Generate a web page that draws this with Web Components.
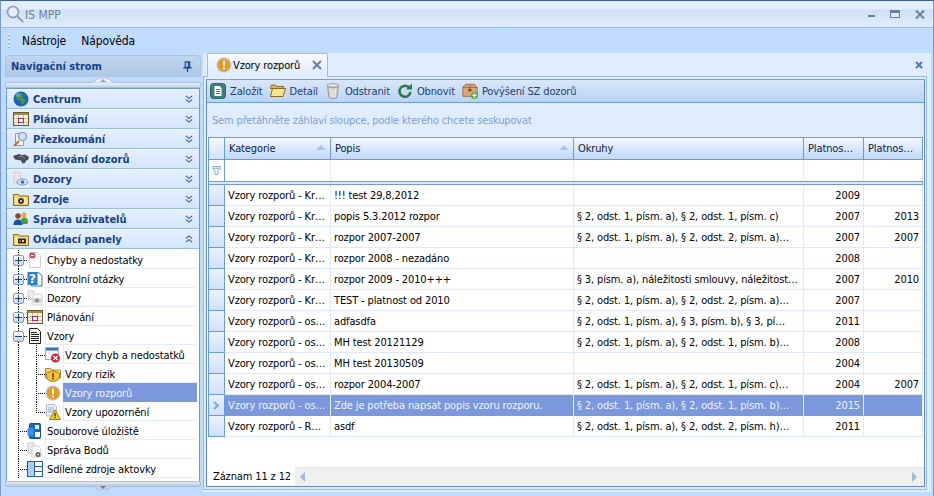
<!DOCTYPE html>
<html lang="cs">
<head>
<meta charset="utf-8">
<title>IS MPP</title>
<style>
  html, body { margin: 0; height: 100%; overflow: hidden; background: #bfdbff; }
  body { font: 11px "DejaVu Sans Condensed", "DejaVu Sans", sans-serif; color: #000; letter-spacing: -0.13px; }
</style>
</head>
<body>
<is-window>
  <title-bar slot="title" text="IS MPP"></title-bar>
  <menu-bar slot="menu"></menu-bar>
  <nav-panel slot="nav"></nav-panel>
  <doc-panel slot="doc"></doc-panel>
</is-window>
<script>
const ICONS = {
  search: `<svg viewBox="0 0 18 18"><circle cx="7" cy="7" r="5.500" fill="#e4eefb" stroke="#8d9db2" stroke-width="1.600"/><path d="M11 11l5.500 5.500" stroke="#9aa5b4" stroke-width="2.400" stroke-linecap="round"/></svg>`,
  globe: `<svg viewBox="0 0 16 16"><circle cx="8" cy="8" r="7.500" fill="#1d5fc4"/><path d="M4 3c2-1.500 5-1.500 6 0 1 1-1 2-.5 3.500S12 7 12.500 9 10 13 9 14c-1-1-.5-3-1.500-4S4 9 3.500 7 3 4 4 3z" fill="#3f9c3a"/><path d="M11 2l3 3-1.500.5z" fill="#3f9c3a"/><circle cx="5" cy="4" r="2" fill="#8cc0f5" opacity=".5"/></svg>`,
  cal: `<svg viewBox="0 0 16 16"><rect x=".5" y="1.500" width="15" height="13" fill="#f8f2da" stroke="#6b5a2c"/><rect x="1" y="2" width="14" height="2" fill="#a58b4a"/><path d="M1 7.500h14M1 11.500h14M5.500 4v10M10.500 4v10" stroke="#cdbf8e"/><rect x="5.500" y="7.500" width="5" height="4" fill="#fff" stroke="#a02a78"/></svg>`,
  review: `<svg viewBox="0 0 16 16"><path d="M2.500 2.500h8v12h-8z" fill="#f7efe0" stroke="#a89a84"/><path d="M1 15l5-5" stroke="#a5763a" stroke-width="2"/><circle cx="9.500" cy="5.500" r="4" fill="#cfe0fb" stroke="#7f90b5" stroke-width="1.200"/></svg>`,
  hands: `<svg viewBox="0 0 16 16"><path d="M0 5l3-1 3-1 3 1 3-.5 4 2.500-1 3-2 .5-1 2.500-2.500.5-1.500-3-3-.5L2 8.500z" fill="#4a4f57"/><path d="M6 6l3-1 3 2.500" stroke="#8a8f98" fill="none"/></svg>`,
  eye: `<svg viewBox="0 0 16 16"><path d="M1 1h5l1.500 1.500V11H1z" fill="#f3e0e4" stroke="#d8c6cf"/><rect x="5" y="7" width="11" height="9" fill="#eef3fa"/><ellipse cx="9.500" cy="11" rx="5.500" ry="3.200" fill="#cfe0f5" stroke="#6f9bd0"/><circle cx="9.500" cy="11" r="1.800" fill="#3e6fb0"/></svg>`,
  folderx: `<svg viewBox="0 0 16 16"><path d="M.5 3.500h5l1 1.500h9v9.500H.5z" fill="#f1cf6b" stroke="#8a6c1e"/><rect x="2" y="6.500" width="12" height="6.500" fill="#f9e7a5"/><circle cx="8" cy="10" r="3" fill="#3c3a36"/><circle cx="8" cy="10" r="1" fill="#eee"/></svg>`,
  users: `<svg viewBox="0 0 16 16"><circle cx="5" cy="5" r="2.800" fill="#8a4b1f"/><path d="M.5 14c0-4 2-5.500 4.500-5.500S9.500 10 9.500 14z" fill="#1e4fa3"/><circle cx="11" cy="4" r="2.500" fill="#f0a13c"/><path d="M8 10c0-2.500 1.500-3.500 3-3.500s4 1 4 3.500-1 3-1 3H9z" fill="#4a9c3d"/></svg>`,
  folderp: `<svg viewBox="0 0 16 16"><path d="M.5 3.500h5l1 1.500h9v9.500H.5z" fill="#f1cf6b" stroke="#8a6c1e"/><rect x="2" y="6.500" width="12" height="6.500" fill="#f9e7a5"/><rect x="5" y="7.500" width="8" height="5" fill="#2c2a2a"/><rect x="6" y="9" width="2" height="2" fill="#d8392e"/><rect x="9" y="9" width="2" height="2" fill="#f0c93a"/></svg>`,
  pageerr: `<svg viewBox="0 0 16 16"><path d="M2.500.5h8l3 3v12h-11z" fill="#fafafa" stroke="#cfcfcf"/><circle cx="5.500" cy="3.500" r="3" fill="#d64b5b"/><path d="M4 3.500h3" stroke="#fff"/></svg>`,
  help: `<svg viewBox="0 0 16 16"><path d="M4.500 1.500h7l3.500 3v10.500H4.500z" fill="#fff" stroke="#2f6fc0"/><rect x=".5" y="1" width="10" height="13" fill="#2f7fd0"/><text x="5.500" y="12" font-family="DejaVu Sans" font-weight="700" font-size="12" fill="#fff" text-anchor="middle">?</text></svg>`,
  eyepale: `<svg viewBox="0 0 16 16"><path d="M1 1h6v9H1z" fill="#ededed" stroke="#cfcfcf"/><path d="M7 4h8v11H5v-5z" fill="#f6f6f6" stroke="#d9d9d9"/><ellipse cx="10" cy="10.500" rx="4.500" ry="2.800" fill="#c9c9c9"/><circle cx="10" cy="10.500" r="1.600" fill="#7b7b7b"/></svg>`,
  doc: `<svg viewBox="0 0 16 16"><path d="M2.500.5h8l3 3v12h-11z" fill="#fffde9" stroke="#222"/><path d="M4 4.500h6M4 6.500h8M4 8.500h8M4 10.500h8M4 12.500h8" stroke="#222"/></svg>`,
  winerr: `<svg viewBox="0 0 16 16"><rect x=".5" y=".5" width="13" height="12" fill="#eef2f8" stroke="#9fb0c6"/><rect x="1" y="1" width="12" height="2.500" fill="#3a73b8"/><circle cx="10.500" cy="11" r="4.500" fill="#d8262c"/><path d="M8.500 9l4 4m0-4l-4 4" stroke="#fff" stroke-width="1.300"/></svg>`,
  folderwarn: `<svg viewBox="0 0 16 16"><path d="M.5 2.500h5l1 1.500h9v8H.5z" fill="#f3d680" stroke="#b08e2e"/><path d="M8 4.500l7 3-1.500 6L8 16l-5.500-2.500-1.500-6z" fill="#f4c63a" stroke="#a87c18"/><rect x="7.200" y="7" width="1.700" height="4.500" fill="#cc1f1f"/><rect x="7.200" y="12" width="1.700" height="1.700" fill="#cc1f1f"/></svg>`,
  warnround: `<svg viewBox="0 0 16 16"><circle cx="8" cy="8" r="7.500" fill="#bdbdbd"/><circle cx="8" cy="8" r="6" fill="#eb9a12"/><rect x="7" y="3.500" width="2" height="6" rx=".8" fill="#fff"/><rect x="7" y="10.500" width="2" height="2" rx=".8" fill="#fff"/></svg>`,
  docwarn: `<svg viewBox="0 0 16 16"><path d="M1.500.5h8l2 2V12h-10z" fill="#e6ecf4" stroke="#b4bfce"/><path d="M3 4h6M3 6h6M3 8h6" stroke="#9db3d0"/><path d="M10 6l5.500 9.500h-11z" fill="#f7d51d" stroke="#9a7d10"/><rect x="9.400" y="9" width="1.200" height="3.500" fill="#222"/><rect x="9.400" y="13" width="1.200" height="1.200" fill="#222"/></svg>`,
  store: `<svg viewBox="0 0 16 16"><rect x="2.500" y=".5" width="11" height="15" rx="1" fill="#1c67c8" stroke="#154c96"/><rect x=".5" y="5" width="6" height="8" rx="1" fill="#3b8fe6"/><rect x="8" y="2" width="4" height="4" fill="#dfeeff"/><rect x="8" y="9" width="5" height="5" fill="#f4f6f8"/></svg>`,
  points: `<svg viewBox="0 0 16 16"><path d="M1 1h6v10H1z" fill="#ededed" stroke="#c9c9c9"/><path d="M5 4h6l3 3v8H5z" fill="#fafafa" stroke="#cbcbcb"/><circle cx="11" cy="12.500" r="2.500" fill="#55595f"/><circle cx="11" cy="12.500" r="1" fill="#ddd"/></svg>`,
  layout: `<svg viewBox="0 0 16 16"><rect x=".5" y=".5" width="15" height="15" fill="#fff" stroke="#1c5fa8"/><rect x="1" y="1" width="6" height="14" fill="#a9d0f5"/><path d="M7.500 1v14M8 5.500h7M8 10.500h7" stroke="#1c5fa8"/></svg>`,
  add: `<svg viewBox="0 0 16 16"><rect x=".5" y=".5" width="15" height="15" rx="3" fill="#3d8178" stroke="#2b655e"/><path d="M4.500 3h5l2 2v8h-7z" fill="#fff"/><path d="M6 6.500h4M6 8.500h4M6 10.500h4" stroke="#3d8178"/></svg>`,
  open: `<svg viewBox="0 0 16 16"><path d="M.5 3.500l1-1.500h4l1 1.500h7v2H.5z" fill="#e0b93f" stroke="#8a6c1e"/><path d="M.5 13.500l2-8h13l-2.500 8z" fill="#f8e38e" stroke="#8a6c1e"/></svg>`,
  trash: `<svg viewBox="0 0 16 16"><ellipse cx="8" cy="2.500" rx="6" ry="1.800" fill="#e6e6e6" stroke="#9a9a9a"/><path d="M2.500 3.500l1.500 11c1.500 1.200 6.500 1.200 8 0l1.500-11c-2 1.200-9 1.200-11 0z" fill="#cfcfcf" stroke="#9a9a9a"/><path d="M5.500 6l.5 8M8 6.500V14.500M10.500 6l-.5 8" stroke="#f2f2f2"/></svg>`,
  refresh: `<svg viewBox="0 0 16 16"><path d="M12.500 5A5.500 5.500 0 1 0 13.500 9" fill="none" stroke="#2c7a4b" stroke-width="2.600"/><path d="M9 6.500h6V.5z" fill="#2c7a4b"/></svg>`,
  box: `<svg viewBox="0 0 18 18"><path d="M1 5l3-3.500h10L17 5v10H1z" fill="#d9a878" stroke="#9a6a3c"/><path d="M1 5h16M9 1.500V5" stroke="#9a6a3c"/><rect x="7" y="6.500" width="3.500" height="3" fill="#8c3b2c"/><circle cx="14" cy="14" r="4" fill="#4caf3f"/><path d="M14 11.500v5M11.500 14h5" stroke="#fff" stroke-width="1.500"/></svg>`,
  filter: `<svg viewBox="0 0 9 10"><path d="M.5.500h8V3L6 5.500v4H3v-4L.5 3z" fill="#fff" stroke="#6f9fdc"/><path d="M1 2.500h7" stroke="#6f9fdc"/></svg>`,
  pin: `<svg viewBox="0 0 9 12"><path d="M2 1h5v6H2zM0 7.500h9M4.500 8v4M5.500 1.500v5" fill="none" stroke="#15428b" stroke-width="1.200"/></svg>`,
  chevdown: `<svg viewBox="0 0 9 9"><path d="M1 1l3.500 3L8 1M1 5l3.500 3L8 5" fill="none" stroke="#4f6c94" stroke-width="1.300"/></svg>`,
  chevup: `<svg viewBox="0 0 9 9"><path d="M1 4l3.500-3L8 4M1 8l3.500-3L8 8" fill="none" stroke="#4f6c94" stroke-width="1.300"/></svg>`,
};

class UiIcon extends HTMLElement {
  connectedCallback() {
    const size = this.getAttribute('size') || 16;
    const root = this.shadowRoot || this.attachShadow({ mode: 'open' });
    root.innerHTML = `
      <style>
        :host { display: inline-block; width: ${size}px; height: ${size}px; flex: none; line-height: 0; }
        svg { width: 100%; height: 100%; display: block; }
      </style>
      ${ICONS[this.getAttribute('name')] || ''}
    `;
  }
}

class IsWindow extends HTMLElement {
  constructor() {
    super();
    this.attachShadow({ mode: 'open' });
    this.shadowRoot.innerHTML = `
      <style>
        :host { display: flex; flex-direction: column; width: 934px; height: 496px; box-sizing: border-box;
          border-top: 1px solid #3c5f8e; border-left: 1px solid #7a9cc8; border-right: 1px solid #7a9cc8; background: #bfdbff; overflow: hidden; }
        .main { flex: 1; display: flex; min-height: 0; padding: 0 2px 4px 0; gap: 2px; }
      </style>
      <slot name="title"></slot>
      <slot name="menu"></slot>
      <div class="main">
        <slot name="nav"></slot>
        <slot name="doc"></slot>
      </div>
    `;
  }
}

class TitleBar extends HTMLElement {
  constructor() {
    super();
    this.attachShadow({ mode: 'open' });
    this.shadowRoot.innerHTML = `
      <style>
        :host { display: flex; align-items: center; height: 27px; box-sizing: border-box; flex: none; padding: 0 8px 0 5px;
          background: linear-gradient(#e2eefd 0, #e2eefd 8px, #cfe0f6 9px, #dfecfb 100%); border-bottom: 1px solid #94bfee;
          color: #6f7f92; font-size: 12px; letter-spacing: 0; }
        .name { margin-left: 1px; margin-top: 1px; flex: 1; }
        .btns { display: flex; gap: 14px; align-items: center; }
        svg { display: block; }
      </style>
      <ui-icon name="search" size="18"></ui-icon>
      <span class="name">${this.getAttribute('text')}</span>
      <div class="btns">
        <svg width="9" height="9" viewBox="0 0 9 9"><rect x="1" y="5" width="7" height="2" fill="#6b7f99"/></svg>
        <svg width="11" height="9" viewBox="0 0 11 9"><rect x=".5" y=".5" width="9" height="7" fill="#dce9f8" stroke="#6b7f99"/><rect x="1" y="1" width="8" height="2" fill="#6b7f99"/></svg>
        <svg width="10" height="9" viewBox="0 0 10 9"><path d="M1 .5l8 8m0-8l-8 8" stroke="#6b7f99" stroke-width="2"/></svg>
      </div>
    `;
  }
}

class MenuBar extends HTMLElement {
  constructor() {
    super();
    this.attachShadow({ mode: 'open' });
    this.shadowRoot.innerHTML = `
      <style>
        :host { display: flex; align-items: center; height: 25px; flex: none; background: #bfdbff; padding-left: 7px; font-size: 12px; letter-spacing: -0.1px; }
        .grip { width: 2px; height: 14px; margin-right: 12px;
          background: repeating-linear-gradient(#fff 0 1px, #7fa0cc 1px 2px, transparent 2px 4px); }
        span { margin-right: 15px; color: #000; }
      </style>
      <div class="grip"></div>
      <span>Nástroje</span><span>Nápověda</span>
    `;
  }
}

class NavPanel extends HTMLElement {
  constructor() {
    super();
    this.attachShadow({ mode: 'open' });
    const items = [
      ['globe', 'Centrum'], ['cal', 'Plánování'], ['review', 'Přezkoumání'], ['hands', 'Plánování dozorů'],
      ['eye', 'Dozory'], ['folderx', 'Zdroje'], ['users', 'Správa uživatelů'],
    ];
    this.shadowRoot.innerHTML = `
      <style>
        :host { display: flex; flex-direction: column; width: 200px; flex: none; box-sizing: border-box; padding: 2px 0 0 4px; letter-spacing: 0; }
        .head { height: 22px; flex: none; box-sizing: border-box; display: flex; align-items: center; justify-content: space-between; padding: 0 7px 0 5px;
          background: linear-gradient(#bfd5ef, #aec8e6); border: 1px solid #a9c3e2; border-radius: 4px 4px 0 0;
          color: #15428b; font-weight: bold; }
        .split { height: 6px; flex: none; box-sizing: border-box; margin-top: 5px; border-radius: 2px; display: flex; justify-content: center;
          background: linear-gradient(#f0f2f5, #c6d3e4); border: 1px solid #a9bfdc; }
        .split svg { margin-top: -5px; height: 5px; width: 22px; display: block; }
        .list { flex: 1; display: flex; flex-direction: column; min-height: 0; margin: 0 1px; border: solid #6d9ad9; border-width: 1px 1px 0; background: #fff; }
        .foot { height: 6px; flex: none; box-sizing: border-box; margin-bottom: 5px; border: 1px solid #a9bfdc; border-radius: 2px; background: linear-gradient(#e6edf6, #b7c8de); display: flex; justify-content: center; }
        .foot svg { height: 5px; width: 22px; margin-top: 3px; display: block; }
      </style>
      <div class="head"><span>Navigační strom</span><ui-icon name="pin" size="11"></ui-icon></div>
      <div class="split"><svg viewBox="0 0 22 5"><path d="M0 5L5 1 8 0h6l3 1 5 4z" fill="#eef1f6" stroke="#a9bfdc"/><path d="M8 4l3-3 3 3z" fill="#8ea8c9"/></svg></div>
      <div class="list">
        ${items.map(([i, t]) => `<nav-item icon="${i}">${t}</nav-item>`).join('')}
        <nav-item icon="folderp" open>Ovládací panely</nav-item>
        <nav-tree></nav-tree>
      </div>
      <div class="foot"><svg viewBox="0 0 22 5"><path d="M0 0l5 4 3 1h6l3-1 5-4z" fill="#c2d0e3" stroke="#a9bfdc"/><path d="M8 1l3 3 3-3z" fill="#5f7ea6"/></svg></div>
    `;
  }
}

class NavItem extends HTMLElement {
  constructor() {
    super();
    this.attachShadow({ mode: 'open' });
    const chev = this.hasAttribute('open') ? 'chevup' : 'chevdown';
    this.shadowRoot.innerHTML = `
      <style>
        :host { display: flex; align-items: center; height: 20px; box-sizing: border-box; flex: none; padding: 0 6px 0 6px;
          background: linear-gradient(#e4efff, #d5e5fb); border-bottom: 1px solid #9cbeea; border-top: 1px solid #f1f7ff;
          color: #15428b; font-weight: bold; }
        .t { flex: 1; margin-left: 4px; }
      </style>
      <ui-icon name="${this.getAttribute('icon')}"></ui-icon>
      <span class="t"><slot></slot></span>
      <ui-icon name="${chev}" size="8"></ui-icon>
    `;
  }
}

class NavTree extends HTMLElement {
  constructor() {
    super();
    this.attachShadow({ mode: 'open' });
    const nodes = [
      ['plus', 'pageerr', 'Chyby a nedostatky'], ['plus', 'help', 'Kontrolní otázky'], ['plus', 'eyepale', 'Dozory'],
      ['plus', 'cal', 'Plánování'], ['minus', 'doc', 'Vzory'],
      ['child', 'winerr', 'Vzory chyb a nedostatků'], ['child', 'folderwarn', 'Vzory rizik'],
      ['child sel', 'warnround', 'Vzory rozporů'], ['childlast', 'docwarn', 'Vzory upozornění'],
      ['leaf', 'store', 'Souborové úložiště'], ['leaf', 'points', 'Správa Bodů'], ['leaf', 'layout', 'Sdílené zdroje aktovky'],
    ];
    this.shadowRoot.innerHTML = `
      <style>
        :host { display: block; flex: 1; background: #fff; padding-top: 1px; overflow: hidden; letter-spacing: -0.13px; }
      </style>
      ${nodes.map(([k, i, t]) => `<tree-node kind="${k}" icon="${i}">${t}</tree-node>`).join('')}
    `;
  }
}

class TreeNode extends HTMLElement {
  constructor() {
    super();
    this.attachShadow({ mode: 'open' });
    const kind = this.getAttribute('kind');
    const child = kind.startsWith('child');
    const sel = kind.includes('sel');
    const dotV = 'repeating-linear-gradient(#000 0 1px, transparent 1px 2px)';
    const dotH = 'repeating-linear-gradient(90deg, #000 0 1px, transparent 1px 2px)';
    const exp = kind === 'plus' || kind === 'minus';
    this.shadowRoot.innerHTML = `
      <style>
        :host { display: flex; height: 19px; align-items: stretch; }
        .gutter { width: 20px; flex: none; display: flex; align-items: center; box-sizing: border-box; padding: 1px 0 0 6px;
          background: ${dotV} 11px 0 / 1px 100% no-repeat${child ? '' : `, ${dotH} 11px 10px / 9px 1px no-repeat`}; }
        .box { width: 11px; height: 11px; box-sizing: border-box; border: 1px solid #7f9db9; border-radius: 2px; background: linear-gradient(#fff, #c7d7ec);
          display: flex; align-items: center; justify-content: center; position: relative; }
        .box::before { content: ""; width: 7px; height: 1px; background: #1c3f6e; }
        .plus::after { content: ""; position: absolute; width: 1px; height: 7px; background: #1c3f6e; }
        .sub { width: 18px; flex: none; background: ${kind === 'childlast'
            ? `${dotV} 9px 0 / 1px 10px no-repeat, ${dotH} 9px 10px / 9px 1px no-repeat`
            : `${dotV} 9px 0 / 1px 100% no-repeat, ${dotH} 9px 10px / 9px 1px no-repeat`}; }
        .ic { width: 17px; flex: none; display: flex; align-items: center; padding-top: 1px; box-sizing: border-box; background: #fff; }
        .txt { flex: 1; display: flex; align-items: center; padding: 2px 0 0 1px; margin: 0 2px 0 1px; border: solid #e2ecfb; border-width: 0 0 1px 1px;
          ${sel ? 'background: #7b98dd; color: #eef3fd; border-color: #7b98dd;' : ''} }
      </style>
      <div class="gutter">${exp ? `<div class="box ${kind === 'plus' ? 'plus' : ''}"></div>` : ''}</div>
      ${child ? '<div class="sub"></div>' : ''}
      <div class="ic"><ui-icon name="${this.getAttribute('icon')}"></ui-icon></div>
      <div class="txt"><slot></slot></div>
    `;
  }
}

class DocPanel extends HTMLElement {
  constructor() {
    super();
    this.attachShadow({ mode: 'open' });
    this.shadowRoot.innerHTML = `
      <style>
        :host { display: flex; flex-direction: column; flex: 1; min-width: 0; background: #dfecff; padding-bottom: 2px; box-sizing: border-box; }
        .tabs { height: 23px; flex: none; display: flex; justify-content: space-between; box-sizing: border-box; padding-left: 4px; }
        .tab { width: 121px; height: 24px; box-sizing: border-box; display: flex; align-items: center; padding: 0 5px 1px 8px; z-index: 1;
          background: linear-gradient(#f9fbff, #e6f0ff 60%, #dfecff); border: 1px solid #a0bde2; border-bottom: 0; border-radius: 2px 2px 0 0; }
        .tab span { flex: 1; margin-left: 1px; }
        .x { margin-right: 8px; align-self: center; display: block; }
        .body { flex: 1; min-height: 0; display: flex; flex-direction: column; background: #dfecff; border: 1px solid #9ebbe0; margin-right: 4px; padding: 2px 1px 2px 2px; }
        .inner { flex: 1; min-height: 0; display: flex; flex-direction: column; border: 1px solid #5f8ac4; border-top-color: #7d9fcf; background: #fff; }
      </style>
      <div class="tabs">
        <div class="tab">
          <ui-icon name="warnround"></ui-icon><span>Vzory rozporů</span>
          <svg width="10" height="10" viewBox="0 0 10 10"><path d="M1 1l8 8m0-8l-8 8" stroke="#6b7f99" stroke-width="2"/></svg>
        </div>
        <svg class="x" width="8" height="8" viewBox="0 0 8 8"><path d="M1 1l6 6m0-6l-6 6" stroke="#4f78b5" stroke-width="2"/></svg>
      </div>
      <div class="body">
        <div class="inner">
          <doc-toolbar></doc-toolbar>
          <data-grid></data-grid>
        </div>
      </div>
    `;
  }
}

class DocToolbar extends HTMLElement {
  constructor() {
    super();
    this.attachShadow({ mode: 'open' });
    const btns = [['add', 'Založit'], ['open', 'Detail'], ['trash', 'Odstranit'], ['refresh', 'Obnovit'], ['box', 'Povýšení SZ dozorů']];
    this.shadowRoot.innerHTML = `
      <style>
        :host { display: flex; align-items: center; height: 22px; flex: none; box-sizing: border-box; padding-left: 3px; gap: 7px;
          background: linear-gradient(#d9e7fa, #b9d3f6); color: #1d3f74; }
        .b { display: flex; align-items: center; gap: 4px; }
      </style>
      ${btns.map(([i, t]) => `<div class="b"><ui-icon name="${i}"></ui-icon><span>${t}</span></div>`).join('')}
    `;
  }
}

const COLS = '17px 106px 243px 230px 60px 59px';
const ROWS = [
  ['Vzory rozporů - Kr…', '!!! test 29,8,2012', '', '2009', ''],
  ['Vzory rozporů - Kr…', 'popis 5.3.2012 rozpor', '§ 2, odst. 1, písm. a), § 2, odst. 1, písm. c)', '2007', '2013'],
  ['Vzory rozporů - Kr…', 'rozpor 2007-2007', '§ 2, odst. 1, písm. a), § 2, odst. 2, písm. a)…', '2007', '2007'],
  ['Vzory rozporů - Kr…', 'rozpor 2008 - nezadáno', '', '2008', ''],
  ['Vzory rozporů - Kr…', 'rozpor 2009 - 2010+++', '§ 3, písm. a), náležitosti smlouvy, náležitost…', '2007', '2010'],
  ['Vzory rozporů - Kr…', 'TEST - platnost od 2010', '§ 2, odst. 1, písm. a), § 2, odst. 2, písm. a)…', '2007', ''],
  ['Vzory rozporů - os…', 'adfasdfa', '§ 2, odst. 1, písm. a), § 3, písm. b), § 3, pí…', '2011', ''],
  ['Vzory rozporů - os…', 'MH test 20121129', '§ 2, odst. 1, písm. a), § 2, odst. 1, písm. b)…', '2008', ''],
  ['Vzory rozporů - os…', 'MH test 20130509', '', '2004', ''],
  ['Vzory rozporů - os…', 'rozpor 2004-2007', '§ 2, odst. 1, písm. a), § 2, odst. 1, písm. c)…', '2004', '2007'],
  ['Vzory rozporů - os…', 'Zde je potřeba napsat popis vzoru rozporu.', '§ 2, odst. 1, písm. a), § 2, odst. 1, písm. b)…', '2015', ''],
  ['Vzory rozporů - R…', 'asdf', '§ 2, odst. 1, písm. a), § 2, odst. 2, písm. h)…', '2011', ''],
];

class DataGrid extends HTMLElement {
  constructor() {
    super();
    this.attachShadow({ mode: 'open' });
    const heads = ['Kategorie', 'Popis', 'Okruhy', 'Platnos…', 'Platnos…'];
    this.shadowRoot.innerHTML = `
      <style>
        :host { flex: 1; min-height: 0; display: flex; flex-direction: column; }
        .group { height: 35px; flex: none; box-sizing: border-box; display: flex; align-items: center; padding: 1px 0 0 5px; background: #e0ecff; color: #7f9fd6;
          border-top: 1px solid #6d9ad9; letter-spacing: -0.16px; }
        .wrap { flex: 1; min-height: 0; display: flex; flex-direction: column; padding-left: 1px; }
        .r { display: grid; grid-template-columns: ${COLS}; flex: none; }
        .hd { height: 23px; }
        .hd > div { box-sizing: border-box; display: flex; align-items: center; padding: 0 4px 0 4px; justify-content: space-between;
          background: linear-gradient(#f4f9ff, #bed8fa); border: solid #6d9ad9; border-width: 1px 1px 1px 0; color: #10213f; }
        .hd .ind { border-left-width: 1px; background: linear-gradient(#f4f9ff, #cfe2fb); }
        .tri { width: 0; height: 0; border: 5px solid transparent; border-bottom: 5px solid #a9c6ee; border-top: 0; margin-top: -2px; }
        .flt { height: 21px; }
        .flt > div { box-sizing: border-box; border-right: 1px solid #e3ecfa; background: #fff; }
        .flt .ind { background: #fff; display: flex; align-items: center; justify-content: center; border-left: 1px solid #6d9ad9; border-right: 1px solid #6d9ad9; }
        .sep { flex: none; width: 715px; background: #dce9fc; border: 1px solid #6d9ad9; box-sizing: border-box; height: 4px; }
        .row { height: 21px; }
        .row > div { box-sizing: border-box; display: flex; align-items: center; padding: 0 3px 0 3px; white-space: nowrap; overflow: hidden;
          border: solid #dfe9f9; border-width: 0 1px 1px 0; }
        .row .ind { background: linear-gradient(#e9f2ff, #cfe1fa); border: solid #6d9ad9; border-width: 0 1px 1px 1px; padding: 0; justify-content: center; }
        .row .num { justify-content: flex-end; }
        .sel > div { background: #7b98dd; color: #eef3fd; border-color: #e8effb; border-bottom-color: #7b98dd; }
        .sel .ind { background: linear-gradient(#e9f2ff, #cfe1fa); color: #7fa4dc; }
        .grow { flex: 1; min-height: 0; }
        .foot { height: 19px; flex: none; display: flex; align-items: center; margin-left: -1px; }
        .foot span { padding-left: 6px; width: 88px; box-sizing: border-box; white-space: nowrap; }
        .sb { flex: 1; height: 19px; display: flex; align-items: center; justify-content: space-between; background: #efefef; border-top: 1px solid #e7e7e7; box-sizing: border-box; padding: 0 7px 0 5px; }
        .l { width: 0; height: 0; border: 5px solid transparent; border-right: 5px solid #a3b5d3; border-left: 0; }
        .rt { width: 0; height: 0; border: 5px solid transparent; border-left: 5px solid #a3b5d3; border-right: 0; }
      </style>
      <div class="group">Sem přetáhněte záhlaví sloupce, podle kterého chcete seskupovat</div>
      <div class="wrap">
        <div class="r hd">
          <div class="ind"></div>
          ${heads.map((h, i) => `<div><span>${h}</span>${i < 2 ? '<i class="tri"></i>' : ''}</div>`).join('')}
        </div>
        <div class="r flt">
          <div class="ind"><ui-icon name="filter" size="9"></ui-icon></div>
          ${heads.map(() => '<div></div>').join('')}
        </div>
        <div class="sep"></div>
        ${ROWS.map((r, i) => `
          <div class="r row ${i === 10 ? 'sel' : ''}">
            <div class="ind">${i === 10 ? '<svg width="7" height="9" viewBox="0 0 7 9"><path d="M1 1l4 3.500L1 8" fill="none" stroke="#7fa4dc" stroke-width="2"/></svg>' : ''}</div>
            <div>${r[0]}</div><div>${r[1]}</div><div>${r[2]}</div><div class="num">${r[3]}</div><div class="num">${r[4]}</div>
          </div>`).join('')}
        <div class="grow"></div>
        <div class="foot">
          <span>Záznam 11 z 12</span>
          <div class="sb"><i class="l"></i><i class="rt"></i></div>
        </div>
      </div>
    `;
  }
}

customElements.define('ui-icon', UiIcon);
customElements.define('title-bar', TitleBar);
customElements.define('menu-bar', MenuBar);
customElements.define('nav-item', NavItem);
customElements.define('tree-node', TreeNode);
customElements.define('nav-tree', NavTree);
customElements.define('nav-panel', NavPanel);
customElements.define('doc-toolbar', DocToolbar);
customElements.define('data-grid', DataGrid);
customElements.define('doc-panel', DocPanel);
customElements.define('is-window', IsWindow);
</script>
</body>
</html>
